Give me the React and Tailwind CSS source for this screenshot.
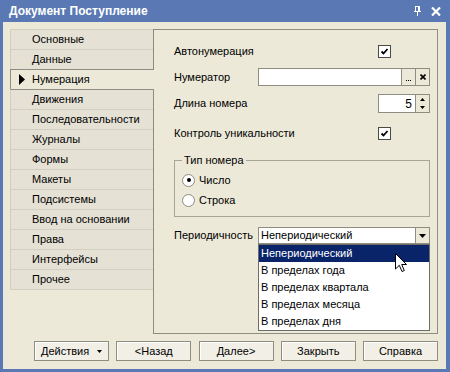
import React from 'react';

const tabs = [
  'Основные',
  'Данные',
  'Нумерация',
  'Движения',
  'Последовательности',
  'Журналы',
  'Формы',
  'Макеты',
  'Подсистемы',
  'Ввод на основании',
  'Права',
  'Интерфейсы',
  'Прочее',
];

const periods = [
  'Непериодический',
  'В пределах года',
  'В пределах квартала',
  'В пределах месяца',
  'В пределах дня',
];

const selectedTab = 2;

function CheckBox() {
  return (
    <div className="w-[13px] h-[13px] border border-[#4a4a46] bg-white flex items-center justify-center">
      <svg width="9" height="9" viewBox="0 0 9 9">
        <path d="M1.5 4.5 L3.5 6.5 L7.5 2" fill="none" stroke="#000" strokeWidth="1.8" />
      </svg>
    </div>
  );
}

function Radio({ checked, label }) {
  return (
    <div className="h-[20px] flex items-center gap-[4px]">
      <div className="w-[13px] h-[13px] rounded-full border border-[#8e8b80] bg-white flex items-center justify-center">
        {checked && <div className="w-[4px] h-[4px] rounded-full bg-black" />}
      </div>
      <span>{label}</span>
    </div>
  );
}

function Button({ children, menu }) {
  return (
    <div className="w-[75px] h-[20px] border border-[#8f8c80] bg-[#f1efe6] shadow-[inset_1px_1px_0_#fff] flex items-center justify-center">
      {menu ? (
        <div className="w-full flex items-center pl-[6px] pr-[6px]">
          <span className="flex-1">{children}</span>
          <svg width="5" height="3" viewBox="0 0 5 3">
            <path d="M0 0 H5 L2.5 3 Z" fill="#000" />
          </svg>
        </div>
      ) : (
        <span>{children}</span>
      )}
    </div>
  );
}

export default function App() {
  return (
    <div className="w-[450px] h-[372px] bg-[#5a79b4] flex flex-col font-['Liberation_Sans',Arial,sans-serif] text-[11px] leading-none text-black select-none">
      {/* title bar */}
      <div className="h-[22px] flex items-center pl-[9px] pr-[9px] text-white">
        <span className="flex-1 font-bold text-[12px]">Документ Поступление</span>
        <svg width="7" height="10" viewBox="0 0 7 10" className="mr-[10px]">
          <rect x="1.5" y="0.5" width="4" height="5" fill="none" stroke="#fff" />
          <rect x="4" y="1" width="1" height="4" fill="#fff" />
          <rect x="0" y="5" width="7" height="1" fill="#fff" />
          <rect x="3" y="6" width="1" height="4" fill="#fff" />
        </svg>
        <svg width="10" height="9" viewBox="0 0 10 9">
          <path d="M1 0.5 L9 8.5 M9 0.5 L1 8.5" stroke="#fff" strokeWidth="2.2" />
        </svg>
      </div>

      {/* body */}
      <div className="flex-1 ml-[3px] mr-[4px] mb-[3px] bg-[#ece9d8] flex flex-col pt-[7px] pl-[7px]">
        <div className="flex h-[305px]">
          {/* tabs */}
          <div className="w-[143px] flex flex-col">
            {tabs.map((t, i) => {
              const sel = i === selectedTab;
              const afterSel = i === selectedTab + 1;
              return (
                <div
                  key={t}
                  className={
                    sel
                      ? 'relative z-10 w-[144px] h-[20px] bg-[#ece9d8] border-t border-l border-[#8f8c82] flex items-center pl-[8px]'
                      : `w-[143px] h-[20px] bg-[#e5e1d5] border-l border-[#d2cec0] border-t ${afterSel ? 'border-t-[#8f8c82]' : 'border-t-[#d2cec0]'} ${i === tabs.length - 1 ? 'h-[21px] border-b border-b-[#d2cec0]' : ''} flex items-center pl-[21px]`
                  }
                >
                  {sel && (
                    <svg width="6" height="11" viewBox="0 0 6 11" className="mr-[7px]">
                      <path d="M0 0 L6 5.5 L0 11 Z" fill="#000" />
                    </svg>
                  )}
                  <span>{t}</span>
                </div>
              );
            })}
          </div>

          {/* panel */}
          <div className="w-[285px] h-[305px] border border-[#8f8c82] flex flex-col pl-[20px] pr-[7px] pt-[11px]">
            <div className="h-[20px] flex items-center">
              <span className="flex-1">Автонумерация</span>
              <div className="mr-[39px]">
                <CheckBox />
              </div>
            </div>

            <div className="mt-[7px] h-[18px] flex items-center">
              <span className="w-[84px]">Нумератор</span>
              <div className="flex-1 h-[18px] border border-[#8f8c82] bg-white flex">
                <div className="flex-1" />
                <div className="w-[14px] border-l border-[#8f8c82] bg-[#ece9d8] flex items-end justify-center gap-[1px] pb-[4px]">
                  <div className="w-[1px] h-[1px] bg-black" />
                  <div className="w-[1px] h-[1px] bg-black" />
                  <div className="w-[1px] h-[1px] bg-black" />
                </div>
                <div className="w-[14px] border-l border-[#8f8c82] bg-[#ece9d8] flex items-center justify-center">
                  <svg width="6" height="6" viewBox="0 0 6 6">
                    <path d="M0.5 0.5 L5.5 5.5 M5.5 0.5 L0.5 5.5" stroke="#000" strokeWidth="1.6" />
                  </svg>
                </div>
              </div>
            </div>

            <div className="mt-[8px] h-[19px] flex items-center">
              <span className="flex-1">Длина номера</span>
              <div className="w-[52px] h-[19px] border border-[#8f8c82] bg-white flex">
                <div className="flex-1 flex items-center justify-end pr-[3px] text-[12px]">5</div>
                <div className="w-[14px] border-l border-[#8f8c82] bg-[#ece9d8] flex flex-col items-center justify-center gap-[5px]">
                  <svg width="5" height="3" viewBox="0 0 5 3">
                    <path d="M2.5 0 L5 3 H0 Z" fill="#000" />
                  </svg>
                  <svg width="5" height="3" viewBox="0 0 5 3">
                    <path d="M0 0 H5 L2.5 3 Z" fill="#000" />
                  </svg>
                </div>
              </div>
            </div>

            <div className="mt-[10px] h-[20px] flex items-center">
              <span className="flex-1">Контроль уникальности</span>
              <div className="mr-[39px]">
                <CheckBox />
              </div>
            </div>

            <fieldset className="mt-[11px] w-full border border-[#a9a698] px-[7px] pb-[6px]">
              <legend className="ml-0 px-[2px] leading-[13px]">Тип номера</legend>
              <div className="mt-[3px]">
                <Radio checked label="Число" />
                <Radio label="Строка" />
              </div>
            </fieldset>

            <div className="mt-[10px] h-[17px] flex items-center">
              <span className="w-[84px]">Периодичность</span>
              <div className="relative flex-1 h-[17px] border border-[#8f8c82] bg-white flex">
                <div className="flex-1 flex items-center pl-[2px]">Непериодический</div>
                <div className="w-[14px] border-l border-[#8f8c82] bg-[#ece9d8] flex items-center justify-center">
                  <svg width="7" height="4" viewBox="0 0 7 4">
                    <path d="M0 0 H7 L3.5 4 Z" fill="#000" />
                  </svg>
                </div>

                <div className="absolute z-20 left-[-1px] right-[-1px] top-[16px] border border-[#6e6d68] bg-white">
                  {periods.map((p, i) => (
                    <div
                      key={p}
                      className={`h-[17px] flex items-center pl-[2px] ${i === 0 ? 'bg-[#0a246a] text-white' : ''}`}
                    >
                      {p}
                    </div>
                  ))}
                  <svg
                    width="13"
                    height="20"
                    viewBox="0 0 13 20"
                    className="absolute left-[136px] top-[8px]"
                  >
                    <path
                      d="M0.5 0.5 L0.5 16 L4.3 12.3 L7 18.5 L9.3 17.5 L6.7 11.5 L11.5 11.5 Z"
                      fill="#fff"
                      stroke="#000"
                      strokeWidth="1"
                    />
                  </svg>
                </div>
              </div>
            </div>
          </div>
        </div>

        {/* buttons */}
        <div className="mt-[7px] ml-[24px] w-[404px] flex justify-between">
          <Button menu>Действия</Button>
          <Button>{'<Назад'}</Button>
          <Button>{'Далее>'}</Button>
          <Button>Закрыть</Button>
          <Button>Справка</Button>
        </div>
      </div>
    </div>
  );
}
